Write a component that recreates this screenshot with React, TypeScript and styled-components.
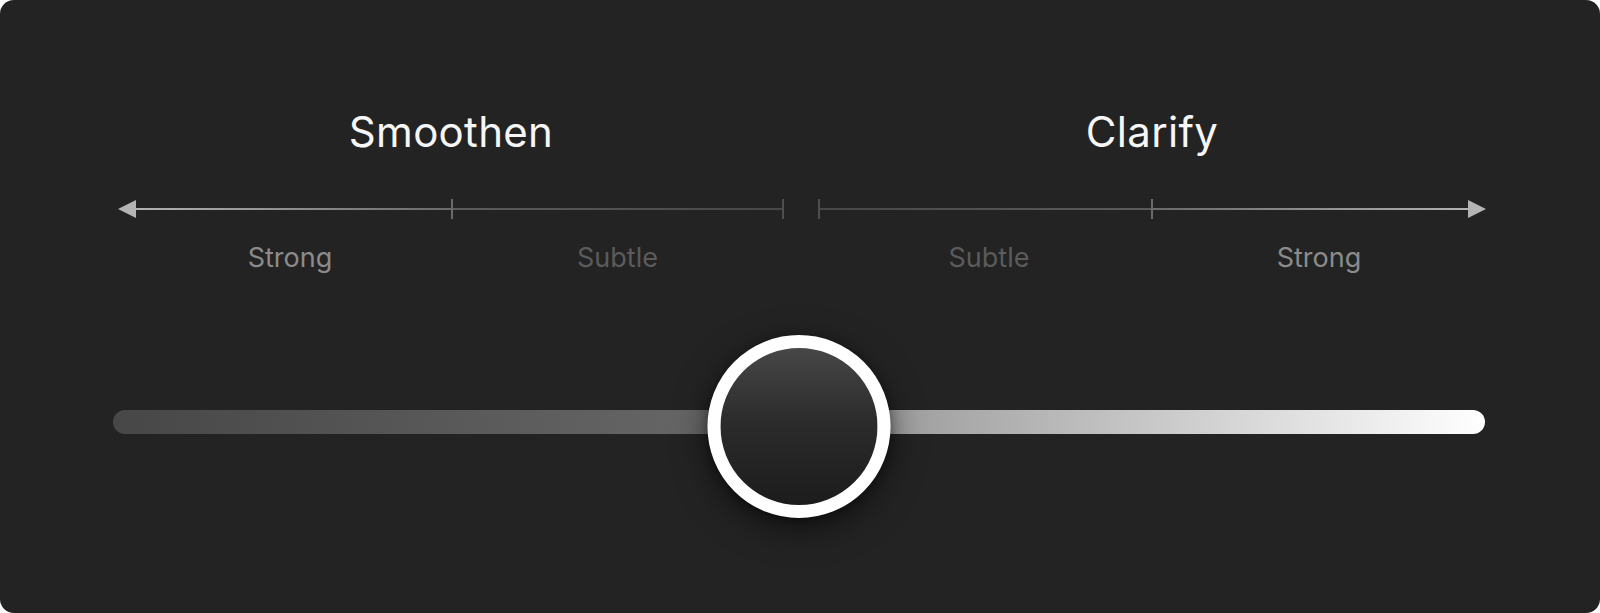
import React from "react";
import styled, { createGlobalStyle } from "styled-components";

const Global = createGlobalStyle`
  html, body { margin: 0; padding: 0; background: #ffffff; }
  body { font-family: Inter, "Noto Sans", sans-serif; }
`;

const Card = styled.div`
  width: 1600px;
  height: 613px;
  box-sizing: border-box;
  background: #232323;
  border-radius: 14px;
  overflow: hidden;
  display: flex;
  flex-direction: column;
  padding: 107px 114px 0 118px;
`;

const Columns = styled.div`
  display: grid;
  grid-template-columns: 666fr 668fr;
  column-gap: 34px;
`;

const Side = styled.div`
  display: flex;
  flex-direction: column;
  align-items: stretch;
`;

const Title = styled.div`
  font-size: 42px;
  line-height: 50px;
  font-weight: 400;
  color: #f6f6f6;
  text-align: center;
  letter-spacing: 0.3px;
`;

const Scale = styled.div<{ $reverse?: boolean }>`
  margin-top: 42px;
  height: 20px;
  display: flex;
  flex-direction: ${(p) => (p.$reverse ? "row-reverse" : "row")};
  align-items: center;
`;

const Rail = styled.div<{ $grow: number; $from: string; $to: string; $dir: string }>`
  flex: ${(p) => p.$grow} 1 0;
  height: 2px;
  background: linear-gradient(${(p) => p.$dir}, ${(p) => p.$from}, ${(p) => p.$to});
`;

const Tick = styled.div<{ $color: string }>`
  flex: 0 0 2px;
  height: 20px;
  background: ${(p) => p.$color};
`;

const ArrowHead = styled.svg`
  flex: 0 0 18px;
  width: 18px;
  height: 18px;
  display: block;
`;

const Labels = styled.div`
  margin-top: 23px;
  display: grid;
  grid-template-columns: 1fr 1fr;
`;

const Label = styled.div<{ $strong?: boolean; $shift?: number }>`
  font-size: 27px;
  line-height: 32px;
  text-align: center;
  color: ${(p) => (p.$strong ? "#8b8b8b" : "#5b5b5b")};
  padding-left: ${(p) => Math.max(0, p.$shift || 0)}px;
  padding-right: ${(p) => Math.max(0, -(p.$shift || 0))}px;
`;

const SliderArea = styled.div`
  margin-top: 61px;
  margin-left: -5px;
  margin-right: 1px;
  height: 183px;
  position: relative;
  display: flex;
  align-items: center;
`;

const Track = styled.div`
  flex: 1;
  height: 24px;
  margin-top: -9px;
  border-radius: 12px;
  background: linear-gradient(
    90deg,
    #474747 0%,
    #6b6b6b 50%,
    #8e8e8e 50%,
    #ffffff 100%
  );
`;

const Knob = styled.div`
  position: absolute;
  top: 0;
  left: 50%;
  transform: translateX(-50%);
  width: 183px;
  height: 183px;
  box-sizing: border-box;
  border-radius: 50%;
  border: 13px solid #ffffff;
  background: linear-gradient(180deg, #474747 0%, #2c2c2c 45%, #1c1c1c 100%);
  box-shadow: 0 10px 34px rgba(0, 0, 0, 0.55), 0 2px 8px rgba(0, 0, 0, 0.35);
`;

const Arrow = ({ dir }: { dir: "left" | "right" }) => (
  <ArrowHead viewBox="0 0 18 18">
    {dir === "left" ? (
      <polygon points="0,9 18,0 18,18" fill="#b4b4b4" />
    ) : (
      <polygon points="18,9 0,0 0,18" fill="#b4b4b4" />
    )}
  </ArrowHead>
);

export default function App() {
  return (
    <>
      <Global />
      <Card>
        <Columns>
          <Side>
            <Title>Smoothen</Title>
            <Scale>
              <Arrow dir="left" />
              <Rail $grow={315} $dir="90deg" $from="#b2b2b2" $to="#6a6a6a" />
              <Tick $color="#6a6a6a" />
              <Rail $grow={330} $dir="90deg" $from="#5c5c5c" $to="#474747" />
              <Tick $color="#4e4e4e" />
            </Scale>
            <Labels>
              <Label $strong $shift={11}>Strong</Label>
              <Label>Subtle</Label>
            </Labels>
          </Side>
          <Side>
            <Title>Clarify</Title>
            <Scale $reverse>
              <Arrow dir="right" />
              <Rail $grow={315} $dir="270deg" $from="#b2b2b2" $to="#6a6a6a" />
              <Tick $color="#6a6a6a" />
              <Rail $grow={331} $dir="270deg" $from="#5c5c5c" $to="#474747" />
              <Tick $color="#4e4e4e" />
            </Scale>
            <Labels>
              <Label $shift={8}>Subtle</Label>
              <Label $strong>Strong</Label>
            </Labels>
          </Side>
        </Columns>
        <SliderArea>
          <Track />
          <Knob />
        </SliderArea>
      </Card>
    </>
  );
}
